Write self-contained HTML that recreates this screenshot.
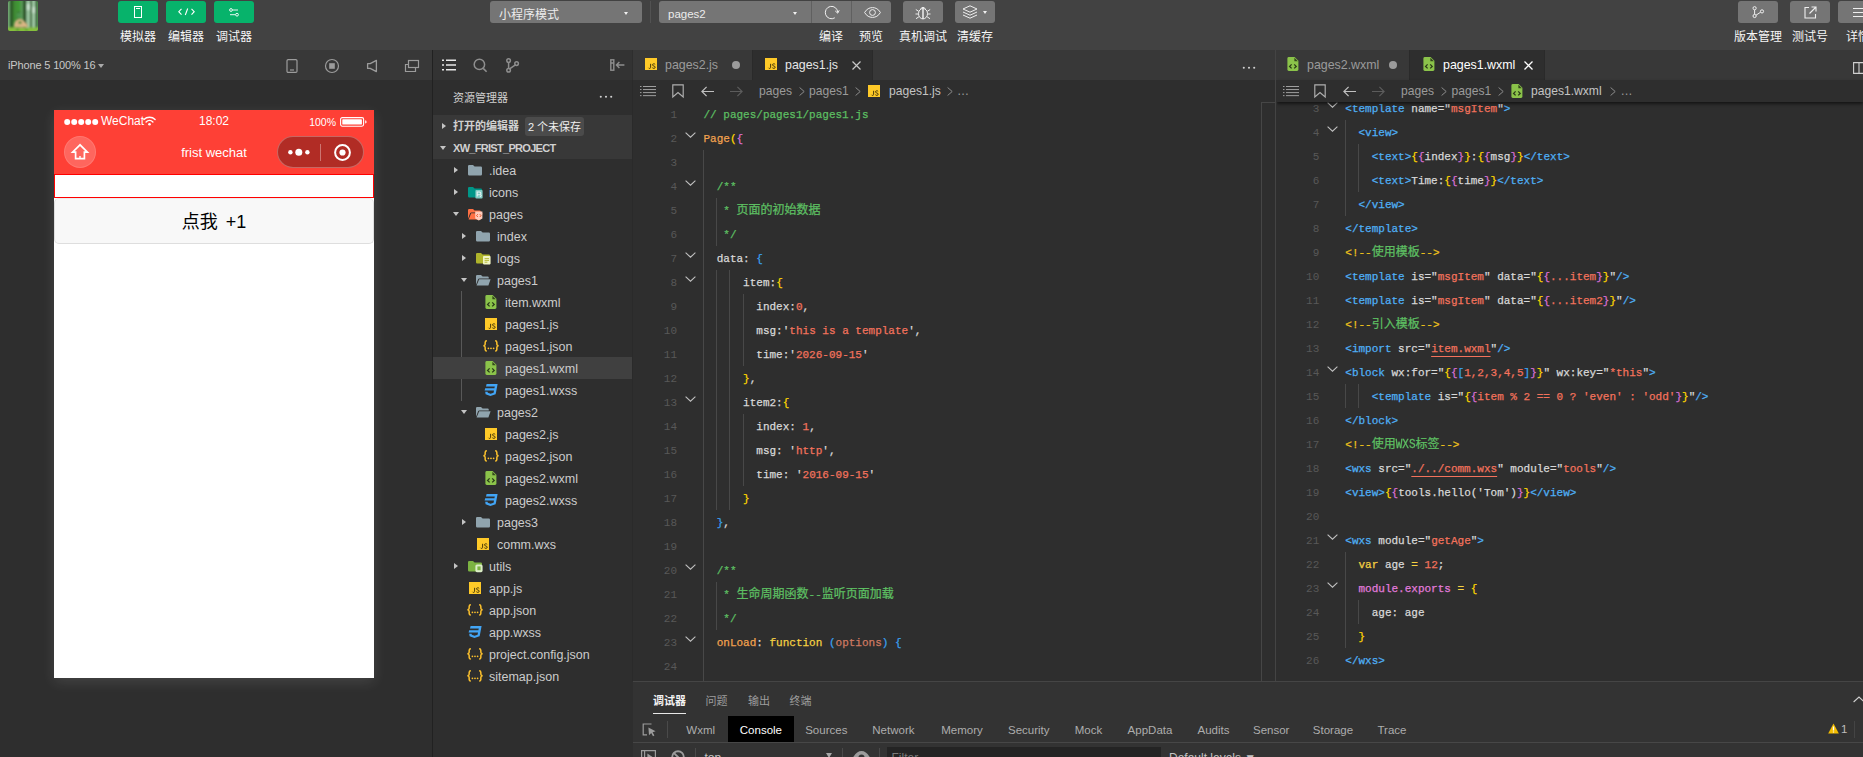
<!DOCTYPE html>
<html lang="zh-CN">
<head>
<meta charset="utf-8">
<title>微信开发者工具</title>
<style>
*{box-sizing:border-box;margin:0;padding:0}
html,body{width:1863px;height:757px;overflow:hidden;background:#2e2e2e}
body{position:relative;font-family:"Liberation Sans","Noto Sans CJK SC",sans-serif;font-size:12px;color:#ccc;-webkit-font-smoothing:antialiased}
.abs{position:absolute}
svg{display:block;overflow:visible}
/* ---------- top toolbar ---------- */
#toolbar{left:0;top:0;width:1863px;height:50px;background:#424242}
.tbtn{position:absolute;top:1px;height:22px;width:40px;border-radius:3px;background:#757575}
.tbtn.g{background:#07b36b}
.tbtn svg{position:absolute}
.tlabel{position:absolute;top:28.6px;height:16px;line-height:16px;font-size:12px;color:#f6f6f6;text-align:center;white-space:nowrap}
.dd{position:absolute;top:1px;height:22px;border-radius:3px;background:#757575;color:#ececec;font-size:12px;line-height:22px;padding-left:9px;white-space:nowrap}
.caret{position:absolute;width:0;height:0;border-left:2.5px solid transparent;border-right:2.5px solid transparent;border-top:3px solid #f0f0f0}
/* ---------- simulator ---------- */
#simbar{left:0;top:50px;width:432px;height:30px;background:#383838}
#sim{left:0;top:80px;width:432px;height:677px;background:#2e2e2e}
#vdiv{left:432px;top:50px;width:1px;height:707px;background:#212121}
/* ---------- file tree ---------- */
#tree{left:433px;top:50px;width:199px;height:707px;background:#2e2e2e}
.row{position:absolute;left:0;width:199px;height:22px;font-size:12.5px;line-height:25.4px;color:#ccc;white-space:nowrap}
.row.sel{background:#404040}
.row span{position:absolute;top:0}
.row .ic{position:absolute}
.ar{position:absolute;top:7.7px;width:0;height:0;border-top:3.3px solid transparent;border-bottom:3.3px solid transparent;border-left:4.6px solid #c4c4c4}
.ad{position:absolute;top:9px;width:0;height:0;border-left:3.2px solid transparent;border-right:3.2px solid transparent;border-top:4.4px solid #c4c4c4}
/* ---------- editors ---------- */
.ed{background:#2e2e2e}
.tabstrip{position:absolute;left:0;top:0;right:0;height:30px;background:#383838}
.tab{position:absolute;top:0;height:30px;background:#383838;font-size:12.4px;line-height:31.4px;color:#9b9b9b;white-space:nowrap}
.tab.on{background:#2e2e2e;color:#e6e6e6}
.crumb{position:absolute;left:0;top:30px;right:0;height:22px;font-size:12.1px;line-height:23.6px;color:#9b9b9b;white-space:nowrap}
.code{position:absolute;font-family:"Liberation Mono","Noto Sans CJK SC",monospace;font-size:11px;line-height:24px;white-space:pre;color:#d8d8d8;-webkit-text-stroke:.25px}
.ln{position:absolute;font-family:"Liberation Mono",monospace;font-size:11px;line-height:24px;text-align:right;color:#585858;white-space:pre}
.code .c,.c{color:#5dbf62}.o{color:#f2a24e}.y{color:#ffd700}.p{color:#da70d6}.b{color:#3aa0f0}.s{color:#f3725c}.t{color:#4fb0f6}.k{color:#f5d142}.v{color:#e27bdc}.a{color:#cf7a62}.m{color:#efc21c}
.zh{font-size:12px}
.u{text-decoration:underline;text-underline-offset:3.5px;text-decoration-thickness:1px}
.fold{position:absolute}
.gd{position:absolute;width:1px;background:#484848}
.dot{position:absolute;top:11px;width:8px;height:8px;border-radius:4px;background:#9b9b9b}
.tab.hi{color:#fff}
/* ---------- bottom panel ---------- */
#panel{left:633px;top:681px;width:1230px;height:76px;background:#333;border-top:1px solid #454545}
.ptab{top:9.5px;height:18px;line-height:18px;font-size:11px;color:#9d9d9d;white-space:nowrap}
.dt{position:absolute;top:34px;width:80px;height:26px;line-height:28.6px;font-size:11.5px;color:#adadad;text-align:center;white-space:nowrap}
.dt.on{color:#fff}
</style>
</head>
<body>
<svg width="0" height="0" style="position:absolute">
<defs>
<symbol id="i-folder" viewBox="0 0 16 14"><path d="M1 3.1Q1 2 2.2 2H6L7.6 3.6H13.8Q15 3.6 15 4.8V11.3Q15 12.5 13.8 12.5H2.2Q1 12.5 1 11.3Z" fill="#90a4ae"/></symbol>
<symbol id="i-folder-open" viewBox="0 0 16 14"><path d="M1 3.1Q1 2 2.2 2H6L7.6 3.6H12.6Q13.8 3.6 13.8 4.8V5.4H4.4Q3.4 5.4 3 6.4L1 11.8Z" fill="#90a4ae"/><path d="M4.2 6.2H15.6L13.4 12.5H1.6Z" fill="#90a4ae"/></symbol>
<symbol id="i-folder-icons" viewBox="0 0 16 14"><path d="M1 3.1Q1 2 2.2 2H6L7.6 3.6H13.8Q15 3.6 15 4.8V11.3Q15 12.5 13.8 12.5H2.2Q1 12.5 1 11.3Z" fill="#009688"/><rect x="8.4" y="5" width="7.2" height="8.6" rx="1" fill="#80cbc4"/><path d="M10.2 11.6V7H12.4A1.4 1.4 0 0 1 12.4 9.8H10.2M13 11.8L14.6 10.2" stroke="#e0f2f1" stroke-width="1.1" fill="none"/></symbol>
<symbol id="i-folder-pages" viewBox="0 0 16 14"><path d="M1 3.1Q1 2 2.2 2H6L7.6 3.6H12.6Q13.8 3.6 13.8 4.8V5.4H4.4Q3.4 5.4 3 6.4L1 11.8Z" fill="#ff7043"/><path d="M4.2 6.2H15.6L13.4 12.5H1.6Z" fill="#ff7043"/><path d="M8.2 4.6H15.4V11.4L11.8 13.6L8.2 11.4Z" fill="#ffccbc"/><path d="M10.8 7.2L9.6 8.6L10.8 10M12.8 7.2L14 8.6L12.8 10" stroke="#e64a19" stroke-width=".9" fill="none"/></symbol>
<symbol id="i-folder-logs" viewBox="0 0 16 14"><path d="M1 3.1Q1 2 2.2 2H6L7.6 3.6H13.8Q15 3.6 15 4.8V11.3Q15 12.5 13.8 12.5H2.2Q1 12.5 1 11.3Z" fill="#afb42b"/><rect x="8" y="5" width="7.6" height="8.4" rx=".8" fill="#f0f4c3"/><path d="M9.6 7.6H14M9.6 9.4H14M9.6 11.2H12.4" stroke="#afb42b" stroke-width=".9"/></symbol>
<symbol id="i-folder-utils" viewBox="0 0 16 14"><path d="M1 3.1Q1 2 2.2 2H6L7.6 3.6H13.8Q15 3.6 15 4.8V11.3Q15 12.5 13.8 12.5H2.2Q1 12.5 1 11.3Z" fill="#7cb342"/><rect x="8.4" y="5.4" width="7.2" height="7.8" rx="1.6" fill="#dcedc8"/><rect x="10.4" y="7.4" width="3.2" height="3.8" fill="#7cb342"/></symbol>
<symbol id="i-wxml" viewBox="0 0 12 14"><path d="M1.8 0H7.6L11.4 3.8V12.6Q11.4 14 10 14H1.8Q.4 14 .4 12.6V1.4Q.4 0 1.8 0Z" fill="#8bc34a"/><path d="M7.4 .8V4.2H10.8Z" fill="#33471c"/><path d="M4.6 7.4L2.6 9.4L4.6 11.4M7.2 7.4L9.2 9.4L7.2 11.4" stroke="#2a3a18" stroke-width="1.3" fill="none"/></symbol>
<symbol id="i-js" viewBox="0 0 12 12"><rect width="12" height="12" fill="#ffca28"/><path d="M5.6 5.8V9.4Q5.6 10.4 4.6 10.4Q3.8 10.4 3.5 9.8" stroke="#4a3b0a" stroke-width="1" fill="none"/><path d="M10.2 6.4Q9.6 5.7 8.6 5.8Q7.5 5.9 7.5 6.9Q7.5 7.7 8.8 8Q10.2 8.3 10.2 9.2Q10.2 10.3 8.9 10.4Q7.8 10.4 7.3 9.6" stroke="#4a3b0a" stroke-width="1" fill="none"/></symbol>
<symbol id="i-json" viewBox="0.6 0 14.8 12" preserveAspectRatio="none"><path d="M4.2 .8Q2.6 .8 2.6 2.4V4.2Q2.6 5.6 1 5.8Q2.6 6 2.6 7.4V9.4Q2.6 11 4.2 11M11.8 .8Q13.4 .8 13.4 2.4V4.2Q13.4 5.6 15 5.8Q13.4 6 13.4 7.4V9.4Q13.4 11 11.8 11" stroke="#fbc02d" stroke-width="1.4" fill="none"/><circle cx="5.6" cy="8.4" r=".8" fill="#fbc02d"/><circle cx="8" cy="8.4" r=".8" fill="#fbc02d"/><circle cx="10.4" cy="8.4" r=".8" fill="#fbc02d"/></symbol>
<symbol id="i-wxss" viewBox="0 0 14 12"><path d="M2.6 0H13.6L12.2 7.6L11.6 10.2L6.4 12L1.6 10.2L1.2 7.8H3.6L3.8 8.8L6.6 9.8L9.6 8.8L10 6.4H.6L1.2 4.2H10.4L10.8 2.4H2Z" fill="#42a5f5"/></symbol>
</defs></svg>
<div id="toolbar" class="abs">
<!-- avatar -->
<div class="abs" id="avatar" style="left:8px;top:1px;width:30px;height:30px;border-radius:2px;overflow:hidden;background:#3f7a36">
<svg width="30" height="30" viewBox="0 0 30 30">
<defs><filter id="avb" x="-10%" y="-10%" width="120%" height="120%"><feGaussianBlur stdDeviation=".9"/></filter></defs>
<g filter="url(#avb)">
<rect x="-2" y="-2" width="34" height="34" fill="#3d7d34"/>
<rect x="-1" y="-2" width="2.4" height="30" fill="#7fb383"/>
<rect x="2" y="-2" width="3.4" height="30" fill="#2c5a28"/>
<rect x="5.4" y="-2" width="4" height="30" fill="#3f8c35"/>
<rect x="9" y="-2" width="4" height="12" fill="#3f9a34"/>
<rect x="12.6" y="-2" width="2.6" height="30" fill="#5c9a5a"/>
<rect x="15.2" y="-2" width="3.2" height="30" fill="#234a20"/>
<rect x="18.4" y="-2" width="3.8" height="30" fill="#9cc7a2"/>
<rect x="19" y="3" width="2.6" height="6" fill="#d3ead8"/>
<rect x="22.2" y="-2" width="2" height="30" fill="#2a5726"/>
<rect x="24.2" y="-2" width="2.8" height="30" fill="#a9d1ae"/>
<rect x="24.6" y="6" width="2.2" height="6" fill="#d9eedd"/>
<rect x="27" y="-2" width="2.2" height="30" fill="#29562a"/>
<rect x="29.2" y="-2" width="3" height="30" fill="#5f9c5f"/>
<rect x="9" y="12" width="4" height="5" fill="#4c9450"/>
<rect x="-2" y="26.4" width="34" height="6" fill="#86bf3c"/>
<rect x="8" y="27.5" width="3" height="2.5" fill="#5da02e"/><rect x="17" y="27.5" width="3" height="2.5" fill="#64a832"/>
</g>
<g filter="url(#avb)"><path d="M6.2 26.4Q5.4 22 8.4 19.2Q11.6 16.6 14.6 18.8L19.2 23Q20.2 24.6 19.6 26.6Z" fill="#dab684"/>
<ellipse cx="12" cy="21.4" rx="1.7" ry="1.5" fill="#3f8a34"/></g>
</svg></div>
<!-- left green buttons -->
<div class="tbtn g" style="left:118px"><svg style="left:16px;top:5px" width="8" height="12" viewBox="0 0 8 12"><rect x=".5" y=".5" width="7" height="11" fill="none" stroke="#fff"/><path d="M2 2.5h4" stroke="#fff"/></svg></div>
<div class="tbtn g" style="left:166px"><svg style="left:12px;top:7px" width="17" height="8" viewBox="0 0 17 8"><path d="M3.5 .8L.8 3.7L3.5 6.6M13.5 .8L16.2 3.7L13.5 6.6M9.7 .5L7.3 7" fill="none" stroke="#fff" stroke-width="1.1"/></svg></div>
<div class="tbtn g" style="left:214px"><svg style="left:15px;top:7px" width="10" height="9" viewBox="0 0 10 9"><circle cx="2" cy="2" r="1.4" fill="none" stroke="#fff" stroke-width=".9"/><path d="M3.6 2H9" stroke="#fff" stroke-width=".9"/><circle cx="8" cy="6.7" r="1.4" fill="none" stroke="#fff" stroke-width=".9"/><path d="M1 6.7H6.4" stroke="#fff" stroke-width=".9"/></svg></div>
<div class="tlabel" style="left:108px;width:60px">模拟器</div>
<div class="tlabel" style="left:156px;width:60px">编辑器</div>
<div class="tlabel" style="left:204px;width:60px">调试器</div>
<!-- center -->
<div class="dd" style="left:490px;width:152px;line-height:28px;overflow:hidden">小程序模式<i class="caret" style="left:134px;top:10.5px"></i></div>
<div class="abs" style="left:650px;top:1px;width:1px;height:22px;background:#525252"></div>
<div class="dd" style="left:659px;width:232px;line-height:26px;font-size:11.5px">pages2<i class="caret" style="left:134px;top:10.5px"></i>
<i class="abs" style="left:152px;top:0;width:1px;height:22px;background:#606060"></i>
<i class="abs" style="left:192px;top:0;width:1px;height:22px;background:#606060"></i>
<svg class="abs" style="left:164.6px;top:4.3px" width="16" height="15" viewBox="0 0 16 15"><path d="M13.7 7.5A6.2 6.2 0 1 0 10.8 12.8" fill="none" stroke="#eee" stroke-width="1"/><path d="M11.2 5.9L13.7 8.2L15.2 5.3" fill="none" stroke="#eee" stroke-width="1"/></svg>
<svg class="abs" style="left:204.6px;top:6.4px" width="17" height="11" viewBox="0 0 17 11"><path d="M.6 5.5C2.6 2 5.4 .6 8.5 .6S14.4 2 16.4 5.5C14.4 9 11.6 10.4 8.5 10.4S2.600 9 .6 5.500Z" fill="none" stroke="#eee" stroke-width="1"/><circle cx="8.5" cy="5.5" r="2.9" fill="none" stroke="#eee" stroke-width="1"/></svg>
</div>
<div class="tlabel" style="left:801px;width:60px">编译</div>
<div class="tlabel" style="left:841px;width:60px">预览</div>
<div class="tbtn" style="left:903px"><svg style="left:11px;top:3px" width="18" height="16" viewBox="0 0 18 16"><ellipse cx="9" cy="9.7" rx="4.5" ry="5.2" fill="none" stroke="#eee"/><path d="M9 4.6V14.9" stroke="#eee" stroke-width="1.5"/><path d="M6.7 4.9A2.5 2.5 0 0 1 11.3 4.900M4.700 7.300L1.800 5.500M13.300 7.300L16.200 5.500M4.500 10H1.500M13.500 10H16.500M4.900 12.800L2 14.700M13.100 12.800L16 14.700" fill="none" stroke="#eee"/></svg></div>
<div class="tbtn" style="left:955px"><svg style="left:7px;top:4px" width="16" height="14" viewBox="0 0 16 14"><path d="M8 .8L15 4L8 7.2L1 4Z M1 7L8 10.2L15 7M1 10L8 13.2L15 10" fill="none" stroke="#eee" stroke-width="1"/></svg><i class="caret" style="left:28px;top:10px"></i></div>
<div class="tlabel" style="left:893px;width:60px">真机调试</div>
<div class="tlabel" style="left:945px;width:60px">清缓存</div>
<!-- right -->
<div class="tbtn" style="left:1738px"><svg style="left:14px;top:4px" width="13" height="14" viewBox="0 0 13 14"><circle cx="2.6" cy="3.2" r="1.6" fill="none" stroke="#eee"/><circle cx="2.6" cy="11" r="1.6" fill="none" stroke="#eee"/><circle cx="10" cy="6.4" r="1.6" fill="none" stroke="#eee"/><path d="M2.6 4.8V9.4M4 10.2L8.6 7.2" fill="none" stroke="#eee"/></svg></div>
<div class="tbtn" style="left:1790px"><svg style="left:14px;top:5px" width="13" height="13" viewBox="0 0 13 13"><path d="M5 1.5H1V12H11.5V8" fill="none" stroke="#eee" stroke-width="1.1"/><path d="M7.5 1H12V5.5M12 1L5.5 7.5" fill="none" stroke="#eee" stroke-width="1.1"/></svg></div>
<div class="tbtn" style="left:1838px"><svg style="left:15px;top:6px" width="12" height="11" viewBox="0 0 12 11"><path d="M0 1.5H12M0 5.5H12M0 9.5H12" stroke="#eee" stroke-width="1.1"/></svg></div>
<div class="tlabel" style="left:1728px;width:60px">版本管理</div>
<div class="tlabel" style="left:1780px;width:60px">测试号</div>
<div class="tlabel" style="left:1846px;width:24px;text-align:left">详情</div>
</div>
<div id="simbar" class="abs">
<div class="abs" style="left:8px;top:0;height:30px;line-height:31px;font-size:11px;letter-spacing:-.15px;color:#c8c8c8;white-space:nowrap">iPhone 5 100% 16<i class="caret" style="left:90px;top:14px;border-top-color:#aaa;border-left-width:3px;border-right-width:3px;border-top-width:4px"></i></div>
<svg class="abs" style="left:286px;top:9px" width="12" height="14" viewBox="0 0 12 14"><rect x="1" y=".6" width="10" height="12.8" rx="1.2" fill="none" stroke="#9c9c9c" stroke-width="1.2"/><path d="M4 11H8" stroke="#9c9c9c" stroke-width="1.2"/></svg>
<svg class="abs" style="left:324px;top:8px" width="16" height="16" viewBox="0 0 16 16"><circle cx="8" cy="8" r="6.5" fill="none" stroke="#9c9c9c" stroke-width="1.2"/><rect x="5.2" y="5.2" width="5.6" height="5.6" fill="#9c9c9c"/></svg>
<svg class="abs" style="left:366px;top:9px" width="12" height="14" viewBox="0 0 12 14"><path d="M1.6 4.6H4.2L10.4 1.4V12.6L4.2 9.4H1.6Z" fill="none" stroke="#9c9c9c" stroke-width="1.3" stroke-linejoin="round"/></svg>
<svg class="abs" style="left:404px;top:9px" width="16" height="14" viewBox="0 0 16 14"><rect x="4.5" y="1.5" width="10" height="7" fill="none" stroke="#9c9c9c" stroke-width="1.2"/><path d="M4.5 5.5H1.5V12.5H11.5V8.5" fill="none" stroke="#9c9c9c" stroke-width="1.2"/></svg>
</div>
<div id="sim" class="abs">
<div class="abs" id="phone" style="left:54px;top:30px;width:320px;height:568px;background:#fff;box-shadow:0 4px 13px rgba(255,255,255,.11)">
<div class="abs" style="left:0;top:0;width:320px;height:64px;background:#fe4036"></div>
<!-- status bar -->
<svg class="abs" style="left:9.6px;top:8px" width="36" height="8" viewBox="0 0 36 8"><g fill="#fff"><circle cx="3.2" cy="4" r="3"/><circle cx="10.2" cy="4" r="3"/><circle cx="17.2" cy="4" r="3"/><circle cx="24.2" cy="4" r="3"/><circle cx="31.2" cy="4" r="3"/></g></svg>
<div class="abs" style="left:47px;top:2px;height:18px;line-height:18px;font-size:12px;color:#fff;white-space:nowrap">WeChat</div>
<svg class="abs" style="left:89px;top:6px" width="13" height="10" viewBox="0 0 13 10"><g fill="none" stroke="#fff" stroke-width="1.4" stroke-linecap="round"><path d="M.9 3.6A8 8 0 0 1 12.1 3.6"/><path d="M3.1 5.9A4.9 4.9 0 0 1 9.9 5.9"/></g><circle cx="6.5" cy="8.2" r="1.3" fill="#fff"/></svg>
<div class="abs" style="left:120px;top:2px;width:80px;height:18px;line-height:18px;font-size:12px;color:#fff;text-align:center">18:02</div>
<div class="abs" style="left:240px;top:3px;width:42px;height:18px;line-height:18px;font-size:10.5px;color:#fff;text-align:right">100%</div>
<svg class="abs" style="left:286px;top:7px" width="28" height="10" viewBox="0 0 28 10"><rect x=".6" y=".6" width="23" height="8.6" rx="1.6" fill="none" stroke="#fff" stroke-width="1.1"/><rect x="2.3" y="2.3" width="19.6" height="5.2" rx=".6" fill="#fff"/><path d="M25.2 3.2Q26.6 3.6 26.6 4.9Q26.6 6.2 25.2 6.6Z" fill="#fff"/></svg>
<!-- nav bar -->
<div class="abs" style="left:10px;top:26px;width:32px;height:32px;border-radius:16px;background:rgba(255,255,255,.2);border:.5px solid rgba(255,255,255,.12)"></div>
<svg class="abs" style="left:17px;top:33px" width="18" height="18" viewBox="0 0 18 18"><path d="M9 1.8L1.6 9.2H4.6V15.6H13.4V9.2H16.4Z" fill="none" stroke="#fff" stroke-width="1.7" stroke-linejoin="miter"/><path d="M9 15.6V13" stroke="#fff" stroke-width="1.4"/></svg>
<div class="abs" style="left:60px;top:32.7px;width:200px;height:20px;line-height:20px;font-size:13px;color:#fff;text-align:center">frist wechat</div>
<div class="abs" style="left:223px;top:26px;width:87px;height:32px;border-radius:16px;background:rgba(0,0,0,.3);border:1px solid rgba(255,255,255,.28)"></div>
<svg class="abs" style="left:233px;top:37px" width="24" height="10" viewBox="0 0 24 10"><g fill="#fff"><circle cx="3.4" cy="5.2" r="2.2"/><circle cx="11.8" cy="5.2" r="3.5"/><circle cx="20.4" cy="5.2" r="2.2"/></g></svg>
<div class="abs" style="left:266px;top:34px;width:1px;height:17px;background:rgba(255,255,255,.35)"></div>
<svg class="abs" style="left:279px;top:33px" width="19" height="19" viewBox="0 0 19 19"><circle cx="9.5" cy="9.5" r="7.4" fill="none" stroke="#fff" stroke-width="2"/><circle cx="9.5" cy="9.5" r="3.1" fill="#fff"/></svg>
<!-- page -->
<div class="abs" style="left:0;top:64px;width:320px;height:24px;border:1px solid #f00;background:#fff"></div>
<div class="abs" style="left:0;top:88px;width:320px;height:46px;border-radius:5px;background:#f8f8f8;border:1px solid #dedede;border-top-color:#ececec;color:#000;font-size:18px;line-height:46px;text-align:center;word-spacing:3px">点我 +1</div>
</div>
</div>
<div id="vdiv" class="abs"></div>
<div id="tree" class="abs">
<div class="abs" style="left:0;top:0;width:199px;height:30px;background:#333"></div>
<div class="abs" style="left:199px;top:30px;width:1px;height:601px;background:#2a2a2a"></div>
<svg class="abs" style="left:9px;top:9px" width="14" height="12" viewBox="0 0 14 12"><path d="M0 1.2H2M4 1.2H14M0 6H2M4 6H14M0 10.8H2M4 10.8H14" stroke="#e8e8e8" stroke-width="1.5"/></svg>
<svg class="abs" style="left:40px;top:8px" width="15" height="15" viewBox="0 0 15 15"><circle cx="6.4" cy="6.4" r="5.2" fill="none" stroke="#8e8e8e" stroke-width="1.5"/><path d="M10.2 10.4L13.6 13.8" stroke="#8e8e8e" stroke-width="1.6"/></svg>
<svg class="abs" style="left:72px;top:8px" width="15" height="15" viewBox="0 0 15 15"><g fill="none" stroke="#8e8e8e" stroke-width="1.5"><circle cx="3.6" cy="2.6" r="1.8"/><circle cx="3.6" cy="12.2" r="1.8"/><circle cx="11.6" cy="5.6" r="1.8"/><path d="M3.6 4.4V10.4M4.6 10.8L10.4 6.8"/></g></svg>
<svg class="abs" style="left:177px;top:9px" width="15" height="12" viewBox="0 0 15 12"><g fill="none" stroke="#8e8e8e" stroke-width="1.4"><rect x=".8" y=".8" width="3" height="10.4"/><path d="M.8 4H3.8M14.4 6H6.6M9.4 3L6.4 6L9.4 9"/></g></svg>
<div class="abs" style="left:20px;top:30px;height:35px;line-height:37px;font-size:11px;color:#d0d0d0;white-space:nowrap">资源管理器</div>
<svg class="abs" style="left:166px;top:45px" width="14" height="4" viewBox="0 0 14 4"><g fill="#d0d0d0"><circle cx="1.8" cy="1.8" r="1.05"/><circle cx="7" cy="1.8" r="1.05"/><circle cx="12.2" cy="1.8" r="1.05"/></g></svg>
<div class="abs" style="left:0;top:65px;width:199px;height:44px;background:#383838"></div>
<i class="ar" style="left:8.5px;top:72.7px"></i>
<div class="abs" style="left:20px;top:65px;height:22px;line-height:23px;font-size:11px;font-weight:bold;color:#d0d0d0;white-space:nowrap">打开的编辑器</div>
<div class="abs" style="left:92px;top:67px;width:59px;height:19px;border-radius:3px;background:#4b4b4b;line-height:20.4px;font-size:11px;color:#f0f0f0;text-align:center;white-space:nowrap">2 个未保存</div>
<i class="ad" style="left:7px;top:96px"></i>
<div class="abs" style="left:20px;top:87px;height:22px;line-height:22px;font-size:11px;font-weight:bold;letter-spacing:-.7px;color:#d0d0d0;white-space:nowrap">XW_FRIST_PROJECT</div>
<div class="abs" style="left:28px;top:241px;width:1px;height:110px;background:#585858"></div>
<div class="row" style="top:109px"><i class="ar" style="left:21px"></i><svg class="ic" style="left:34px;top:4px" width="16" height="14"><use href="#i-folder"/></svg><span style="left:56px">.idea</span></div>
<div class="row" style="top:131px"><i class="ar" style="left:21px"></i><svg class="ic" style="left:34px;top:4px" width="16" height="14"><use href="#i-folder-icons"/></svg><span style="left:56px">icons</span></div>
<div class="row" style="top:153px"><i class="ad" style="left:20px"></i><svg class="ic" style="left:34px;top:4px" width="16" height="14"><use href="#i-folder-pages"/></svg><span style="left:56px">pages</span></div>
<div class="row" style="top:175px"><i class="ar" style="left:29px"></i><svg class="ic" style="left:42px;top:4px" width="16" height="14"><use href="#i-folder"/></svg><span style="left:64px">index</span></div>
<div class="row" style="top:197px"><i class="ar" style="left:29px"></i><svg class="ic" style="left:42px;top:4px" width="16" height="14"><use href="#i-folder-logs"/></svg><span style="left:64px">logs</span></div>
<div class="row" style="top:219px"><i class="ad" style="left:28px"></i><svg class="ic" style="left:42px;top:4px" width="16" height="14"><use href="#i-folder-open"/></svg><span style="left:64px">pages1</span></div>
<div class="row" style="top:241px"><svg class="ic" style="left:52px;top:4px" width="12" height="14"><use href="#i-wxml"/></svg><span style="left:72px">item.wxml</span></div>
<div class="row" style="top:263px"><svg class="ic" style="left:52px;top:5px" width="12" height="12"><use href="#i-js"/></svg><span style="left:72px">pages1.js</span></div>
<div class="row" style="top:285px"><svg class="ic" style="left:50px;top:5px" width="16" height="12"><use href="#i-json"/></svg><span style="left:72px">pages1.json</span></div>
<div class="row sel" style="top:307px"><svg class="ic" style="left:52px;top:4px" width="12" height="14"><use href="#i-wxml"/></svg><span style="left:72px">pages1.wxml</span></div>
<div class="row" style="top:329px"><svg class="ic" style="left:51px;top:5px" width="14" height="12"><use href="#i-wxss"/></svg><span style="left:72px">pages1.wxss</span></div>
<div class="row" style="top:351px"><i class="ad" style="left:28px"></i><svg class="ic" style="left:42px;top:4px" width="16" height="14"><use href="#i-folder-open"/></svg><span style="left:64px">pages2</span></div>
<div class="row" style="top:373px"><svg class="ic" style="left:52px;top:5px" width="12" height="12"><use href="#i-js"/></svg><span style="left:72px">pages2.js</span></div>
<div class="row" style="top:395px"><svg class="ic" style="left:50px;top:5px" width="16" height="12"><use href="#i-json"/></svg><span style="left:72px">pages2.json</span></div>
<div class="row" style="top:417px"><svg class="ic" style="left:52px;top:4px" width="12" height="14"><use href="#i-wxml"/></svg><span style="left:72px">pages2.wxml</span></div>
<div class="row" style="top:439px"><svg class="ic" style="left:51px;top:5px" width="14" height="12"><use href="#i-wxss"/></svg><span style="left:72px">pages2.wxss</span></div>
<div class="row" style="top:461px"><i class="ar" style="left:29px"></i><svg class="ic" style="left:42px;top:4px" width="16" height="14"><use href="#i-folder"/></svg><span style="left:64px">pages3</span></div>
<div class="row" style="top:483px"><svg class="ic" style="left:44px;top:5px" width="12" height="12"><use href="#i-js"/></svg><span style="left:64px">comm.wxs</span></div>
<div class="row" style="top:505px"><i class="ar" style="left:21px"></i><svg class="ic" style="left:34px;top:4px" width="16" height="14"><use href="#i-folder-utils"/></svg><span style="left:56px">utils</span></div>
<div class="row" style="top:527px"><svg class="ic" style="left:36px;top:5px" width="12" height="12"><use href="#i-js"/></svg><span style="left:56px">app.js</span></div>
<div class="row" style="top:549px"><svg class="ic" style="left:34px;top:5px" width="16" height="12"><use href="#i-json"/></svg><span style="left:56px">app.json</span></div>
<div class="row" style="top:571px"><svg class="ic" style="left:35px;top:5px" width="14" height="12"><use href="#i-wxss"/></svg><span style="left:56px">app.wxss</span></div>
<div class="row" style="top:593px"><svg class="ic" style="left:34px;top:5px" width="16" height="12"><use href="#i-json"/></svg><span style="left:56px">project.config.json</span></div>
<div class="row" style="top:615px"><svg class="ic" style="left:34px;top:5px" width="16" height="12"><use href="#i-json"/></svg><span style="left:56px">sitemap.json</span></div>
</div>
<!--ED1--><div id="ed1" class="abs ed" style="left:633px;top:50px;width:642px;height:631px;overflow:hidden">
<div class="ln" style="left:0;top:52.5px;width:44px">1
2
3
4
5
6
7
8
9
10
11
12
13
14
15
16
17
18
19
20
21
22
23
24</div>
<svg class="fold" style="left:52.3px;top:82px" width="11" height="6" viewBox="0 0 11 6"><path d="M.6 .6L5.5 5.2L10.4 .6" fill="none" stroke="#c0c0c0" stroke-width="1.1"/></svg>
<svg class="fold" style="left:52.3px;top:130px" width="11" height="6" viewBox="0 0 11 6"><path d="M.6 .6L5.5 5.2L10.4 .6" fill="none" stroke="#c0c0c0" stroke-width="1.1"/></svg>
<svg class="fold" style="left:52.3px;top:202px" width="11" height="6" viewBox="0 0 11 6"><path d="M.6 .6L5.5 5.2L10.4 .6" fill="none" stroke="#c0c0c0" stroke-width="1.1"/></svg>
<svg class="fold" style="left:52.3px;top:226px" width="11" height="6" viewBox="0 0 11 6"><path d="M.6 .6L5.5 5.2L10.4 .6" fill="none" stroke="#c0c0c0" stroke-width="1.1"/></svg>
<svg class="fold" style="left:52.3px;top:346px" width="11" height="6" viewBox="0 0 11 6"><path d="M.6 .6L5.5 5.2L10.4 .6" fill="none" stroke="#c0c0c0" stroke-width="1.1"/></svg>
<svg class="fold" style="left:52.3px;top:514px" width="11" height="6" viewBox="0 0 11 6"><path d="M.6 .6L5.5 5.2L10.4 .6" fill="none" stroke="#c0c0c0" stroke-width="1.1"/></svg>
<svg class="fold" style="left:52.3px;top:586px" width="11" height="6" viewBox="0 0 11 6"><path d="M.6 .6L5.5 5.2L10.4 .6" fill="none" stroke="#c0c0c0" stroke-width="1.1"/></svg>
<i class="gd" style="left:70px;top:100px;height:552px"></i>
<i class="gd" style="left:83px;top:148px;height:48px"></i>
<i class="gd" style="left:83px;top:220px;height:240px"></i>
<i class="gd" style="left:83px;top:532px;height:48px"></i>
<i class="gd" style="left:96px;top:220px;height:240px"></i>
<i class="gd" style="left:110px;top:244px;height:72px"></i>
<i class="gd" style="left:110px;top:364px;height:72px"></i>
<div class="code" style="left:70.5px;top:52.5px"><span class="c">// pages/pages1/pages1.js</span>
<span class="o">Page</span><span class="y">(</span><span class="p">{</span>

  <span class="c">/**</span>
   <span class="c">* </span><span class="c zh">页面的初始数据</span>
   <span class="c">*/</span>
  data<span>:</span> <span class="b">{</span>
      item:<span class="y">{</span>
        index:<span class="s">0</span>,
        msg:'<span class="s">this is a template</span>',
        time:'<span class="s">2026-09-15</span>'
      <span class="y">}</span>,
      item2:<span class="y">{</span>
        index: <span class="s">1</span>,
        msg: '<span class="s">http</span>',
        time: '<span class="s">2016-09-15</span>'
      <span class="y">}</span>
  <span class="b">}</span>,

  <span class="c">/**</span>
   <span class="c">* </span><span class="c zh">生命周期函数</span><span class="c">--</span><span class="c zh">监听页面加载</span>
   <span class="c">*/</span>
  <span class="o">onLoad</span>: <span class="k">function</span> <span class="b">(</span><span class="a">options</span><span class="b">)</span> <span class="b">{</span>
</div>
<div class="tabstrip">
<div class="tab" style="left:0;width:119px"><svg class="abs" style="left:12px;top:8px" width="12" height="12"><use href="#i-js"/></svg><span class="abs" style="left:32px">pages2.js</span><i class="dot" style="left:99px"></i></div>
<div class="tab on" style="left:119px;width:121px;border-left:1px solid #2a2a2a;border-right:1px solid #2a2a2a"><svg class="abs" style="left:12px;top:8px" width="12" height="12"><use href="#i-js"/></svg><span class="abs" style="left:32px">pages1.js</span><svg class="abs" style="left:99px;top:11px" width="9" height="9" viewBox="0 0 9 9"><path d="M.5 .5L8.5 8.5M8.5 .5L.5 8.5" stroke="#c8c8c8" stroke-width="1.2"/></svg></div>
<svg class="abs" style="left:608.5px;top:15.8px" width="14" height="4" viewBox="0 0 14 4"><g fill="#d0d0d0"><circle cx="1.8" cy="1.8" r="1.05"/><circle cx="7" cy="1.8" r="1.05"/><circle cx="12.2" cy="1.8" r="1.05"/></g></svg>
</div>
<div class="crumb">
<svg class="abs" style="left:7px;top:6px" width="16" height="11" viewBox="0 0 16 11"><path d="M0 .5H1.5M3 .5H16M0 3.55H1.5M3 3.55H16M0 6.6H1.5M3 6.6H16M0 9.65H1.5M3 9.65H16" stroke="#b4b4b4" stroke-width=".85"/></svg>
<svg class="abs" style="left:39px;top:4px" width="12" height="14" viewBox="0 0 12 14"><path d="M.8 .8H11.2V13L6 8.6L.8 13Z" fill="none" stroke="#b0b0b0" stroke-width="1.15"/></svg>
<svg class="abs" style="left:68px;top:6px" width="13" height="11" viewBox="0 0 13 11"><path d="M13 5.5H1M5.6 .8L.9 5.5L5.6 10.2" fill="none" stroke="#c0c0c0" stroke-width="1.2"/></svg>
<svg class="abs" style="left:96.5px;top:6px" width="13" height="11" viewBox="0 0 13 11"><path d="M0 5.5H12M7.4 .8L12.1 5.5L7.4 10.2" fill="none" stroke="#5c5c5c" stroke-width="1.2"/></svg>
<span class="abs" style="left:126px">pages</span><svg class="abs" style="left:166px;top:7px" width="6" height="9" viewBox="0 0 6 9"><path d="M.6 .5L5.2 4.5L.6 8.5" fill="none" stroke="#8c8c8c" stroke-width="1"/></svg><span class="abs" style="left:176px">pages1</span><svg class="abs" style="left:222px;top:7px" width="6" height="9" viewBox="0 0 6 9"><path d="M.6 .5L5.2 4.5L.6 8.5" fill="none" stroke="#8c8c8c" stroke-width="1"/></svg><svg class="abs" style="left:235px;top:5px" width="12" height="12"><use href="#i-js"/></svg><span class="abs" style="left:256px;color:#c4c4c4">pages1.js</span><svg class="abs" style="left:314px;top:7px" width="6" height="9" viewBox="0 0 6 9"><path d="M.6 .5L5.2 4.5L.6 8.5" fill="none" stroke="#8c8c8c" stroke-width="1"/></svg><span class="abs" style="left:324px">…</span>
</div>
<div class="abs" style="left:628px;top:52px;width:15px;height:579px;border-left:1px solid #464646;border-top:1px solid #464646"></div>
</div><!--/ED1-->
<div class="abs" style="left:1275px;top:50px;width:1px;height:631px;background:#444"></div><div class="abs" style="left:1276px;top:50px;width:1px;height:30px;background:#383838"></div>
<!--ED2--><div id="ed2" class="abs ed" style="left:1277px;top:50px;width:586px;height:631px;overflow:hidden">
<div class="ln" style="left:0;top:46.5px;width:42.3px">3
4
5
6
7
8
9
10
11
12
13
14
15
16
17
18
19
20
21
22
23
24
25
26
27</div>
<svg class="fold" style="left:50px;top:52px" width="11" height="6" viewBox="0 0 11 6"><path d="M.6 .6L5.5 5.2L10.4 .6" fill="none" stroke="#c0c0c0" stroke-width="1.1"/></svg>
<svg class="fold" style="left:50px;top:76px" width="11" height="6" viewBox="0 0 11 6"><path d="M.6 .6L5.5 5.2L10.4 .6" fill="none" stroke="#c0c0c0" stroke-width="1.1"/></svg>
<svg class="fold" style="left:50px;top:316px" width="11" height="6" viewBox="0 0 11 6"><path d="M.6 .6L5.5 5.2L10.4 .6" fill="none" stroke="#c0c0c0" stroke-width="1.1"/></svg>
<svg class="fold" style="left:50px;top:484px" width="11" height="6" viewBox="0 0 11 6"><path d="M.6 .6L5.5 5.2L10.4 .6" fill="none" stroke="#c0c0c0" stroke-width="1.1"/></svg>
<svg class="fold" style="left:50px;top:532px" width="11" height="6" viewBox="0 0 11 6"><path d="M.6 .6L5.5 5.2L10.4 .6" fill="none" stroke="#c0c0c0" stroke-width="1.1"/></svg>
<i class="gd" style="left:68px;top:70px;height:96px"></i>
<i class="gd" style="left:81px;top:94px;height:48px"></i>
<i class="gd" style="left:68px;top:334px;height:24px"></i>
<i class="gd" style="left:81px;top:334px;height:24px"></i>
<i class="gd" style="left:68px;top:502px;height:96px"></i>
<i class="gd" style="left:81px;top:550px;height:24px"></i>
<div class="code" style="left:68.3px;top:46.5px"><span class="t">&lt;template</span> name="<span class="s">msgItem</span>"<span class="t">&gt;</span>
  <span class="t">&lt;view&gt;</span>
    <span class="t">&lt;text&gt;</span><span class="y">{</span><span class="p">{</span>index<span class="p">}</span><span class="y">}</span>:<span class="y">{</span><span class="p">{</span>msg<span class="p">}</span><span class="y">}</span><span class="t">&lt;/text&gt;</span>
    <span class="t">&lt;text&gt;</span>Time:<span class="y">{</span><span class="p">{</span>time<span class="p">}</span><span class="y">}</span><span class="t">&lt;/text&gt;</span>
  <span class="t">&lt;/view&gt;</span>
<span class="t">&lt;/template&gt;</span>
<span class="m">&lt;!--</span><span class="c zh">使用模板</span><span class="m">--&gt;</span>
<span class="t">&lt;template</span> is="<span class="s">msgItem</span>" data="<span class="y">{</span><span class="p">{</span><span class="s">...item</span><span class="p">}</span><span class="y">}</span>"<span class="t">/&gt;</span>
<span class="t">&lt;template</span> is="<span class="s">msgItem</span>" data="<span class="y">{</span><span class="p">{</span><span class="s">...item2</span><span class="p">}</span><span class="y">}</span>"<span class="t">/&gt;</span>
<span class="m">&lt;!--</span><span class="c zh">引入模板</span><span class="m">--&gt;</span>
<span class="t">&lt;import</span> src="<span class="s u">item.wxml</span>"<span class="t">/&gt;</span>
<span class="t">&lt;block</span> wx:for="<span class="y">{</span><span class="p">{</span><span class="b">[</span><span class="s">1,2,3,4,5</span><span class="b">]</span><span class="p">}</span><span class="y">}</span>" wx:key="<span class="s">*this</span>"<span class="t">&gt;</span>
    <span class="t">&lt;template</span> is="<span class="y">{</span><span class="p">{</span><span class="s">item % 2 == 0 ? 'even' : 'odd'</span><span class="p">}</span><span class="y">}</span>"<span class="t">/&gt;</span>
<span class="t">&lt;/block&gt;</span>
<span class="m">&lt;!--</span><span class="c zh">使用</span><span class="c" style="display:inline-block;transform:scaleY(1.18);transform-origin:50% 72%">WXS</span><span class="c zh">标签</span><span class="m">--&gt;</span>
<span class="t">&lt;wxs</span> src="<span class="s u">./../comm.wxs</span>" module="<span class="s">tools</span>"<span class="t">/&gt;</span>
<span class="t">&lt;view&gt;</span><span class="y">{</span><span class="p">{</span>tools.hello('Tom')<span class="p">}</span><span class="y">}</span><span class="t">&lt;/view&gt;</span>

<span class="t">&lt;wxs</span> module="<span class="s">getAge</span>"<span class="t">&gt;</span>
  <span class="k">var</span> age <span class="k">=</span> <span class="s">12</span>;
  <span class="v">module.exports</span> <span class="k">=</span> <span class="y">{</span>
    age: age
  <span class="y">}</span>
<span class="t">&lt;/wxs&gt;</span>
</div>
<div class="tabstrip">
<div class="tab" style="left:0;width:132px"><svg class="abs" style="left:10px;top:7px" width="12" height="14"><use href="#i-wxml"/></svg><span class="abs" style="left:30px">pages2.wxml</span><i class="dot" style="left:112px"></i></div>
<div class="tab on hi" style="left:132px;width:136px;border-left:1px solid #2a2a2a;border-right:1px solid #2a2a2a"><svg class="abs" style="left:13px;top:7px" width="12" height="14"><use href="#i-wxml"/></svg><span class="abs" style="left:33px">pages1.wxml</span><svg class="abs" style="left:114px;top:11px" width="9" height="9" viewBox="0 0 9 9"><path d="M.5 .5L8.5 8.5M8.5 .5L.5 8.5" stroke="#fff" stroke-width="1.3"/></svg></div>
<svg class="abs" style="left:576px;top:12px" width="12" height="12" viewBox="0 0 12 12"><path d="M.6 .6H11.4V11.4H.6ZM6 .6V11.4" fill="none" stroke="#d0d0d0" stroke-width="1.1"/></svg>
</div>
<div class="crumb" style="background:#2e2e2e;box-shadow:0 2px 3px rgba(0,0,0,.55)">
<svg class="abs" style="left:5.5px;top:6px" width="16" height="11" viewBox="0 0 16 11"><path d="M0 .5H1.5M3 .5H16M0 3.55H1.5M3 3.55H16M0 6.6H1.5M3 6.6H16M0 9.65H1.5M3 9.65H16" stroke="#b4b4b4" stroke-width=".85"/></svg>
<svg class="abs" style="left:37px;top:4px" width="12" height="14" viewBox="0 0 12 14"><path d="M.8 .8H11.2V13L6 8.6L.8 13Z" fill="none" stroke="#b0b0b0" stroke-width="1.15"/></svg>
<svg class="abs" style="left:66px;top:6px" width="13" height="11" viewBox="0 0 13 11"><path d="M13 5.5H1M5.6 .8L.9 5.5L5.6 10.2" fill="none" stroke="#c0c0c0" stroke-width="1.2"/></svg>
<svg class="abs" style="left:94.5px;top:6px" width="13" height="11" viewBox="0 0 13 11"><path d="M0 5.5H12M7.4 .8L12.1 5.5L7.4 10.2" fill="none" stroke="#5c5c5c" stroke-width="1.2"/></svg>
<span class="abs" style="left:124px">pages</span><svg class="abs" style="left:164px;top:7px" width="6" height="9" viewBox="0 0 6 9"><path d="M.6 .5L5.2 4.5L.6 8.5" fill="none" stroke="#8c8c8c" stroke-width="1"/></svg><span class="abs" style="left:174.5px">pages1</span><svg class="abs" style="left:221px;top:7px" width="6" height="9" viewBox="0 0 6 9"><path d="M.6 .5L5.2 4.5L.6 8.5" fill="none" stroke="#8c8c8c" stroke-width="1"/></svg><svg class="abs" style="left:234px;top:4px" width="12" height="14"><use href="#i-wxml"/></svg><span class="abs" style="left:254px;color:#c4c4c4">pages1.wxml</span><svg class="abs" style="left:332.5px;top:7px" width="6" height="9" viewBox="0 0 6 9"><path d="M.6 .5L5.2 4.5L.6 8.5" fill="none" stroke="#8c8c8c" stroke-width="1"/></svg><span class="abs" style="left:343.5px">…</span>
</div>
</div><!--/ED2-->
<!--PANEL--><div id="panel" class="abs">
<div class="abs" style="left:20px;top:10px;height:18px;line-height:18px;font-size:11px;font-weight:bold;color:#f2f2f2;white-space:nowrap">调试器</div>
<div class="abs" style="left:20px;top:31px;width:33px;height:1px;background:#e8e8e8"></div>
<div class="abs ptab" style="left:72.5px">问题</div>
<div class="abs ptab" style="left:115px">输出</div>
<div class="abs ptab" style="left:156.5px">终端</div>
<svg class="abs" style="left:1220px;top:14px" width="12" height="7" viewBox="0 0 12 7"><path d="M.6 6L6 1L11.4 6" fill="none" stroke="#d0d0d0" stroke-width="1.1"/></svg>
<!-- devtools tab bar -->
<div class="abs" style="left:0;top:34px;width:1230px;height:27px;border-bottom:1px solid #474747"></div>
<div class="abs" style="left:95px;top:34px;width:66px;height:26px;background:#000"></div>
<svg class="abs" style="left:9px;top:41px" width="15" height="14" viewBox="0 0 15 14"><path d="M9.5 1H1.2V11.8H5" fill="none" stroke="#9c9c9c" stroke-width="1.2"/><path d="M6.4 4.6L13.6 8.2L10.6 9.2L12.4 12.4L11 13.2L9.2 10L7 12.2Z" fill="#9c9c9c"/></svg>
<div class="abs" style="left:34px;top:39px;width:1px;height:17px;background:#4a4a4a"></div>
<div class="dt" style="left:27.7px">Wxml</div>
<div class="dt on" style="left:87.9px">Console</div>
<div class="dt" style="left:153.3px">Sources</div>
<div class="dt" style="left:220.4px">Network</div>
<div class="dt" style="left:289px">Memory</div>
<div class="dt" style="left:355.8px">Security</div>
<div class="dt" style="left:415.5px">Mock</div>
<div class="dt" style="left:477px">AppData</div>
<div class="dt" style="left:540.5px">Audits</div>
<div class="dt" style="left:598.2px">Sensor</div>
<div class="dt" style="left:660px">Storage</div>
<div class="dt" style="left:719px">Trace</div>

<svg class="abs" style="left:1194.5px;top:40.8px" width="11" height="11" viewBox="0 0 11 11"><path d="M5.5 .4L10.8 10.4H.2Z" fill="#f4bd00"/><path d="M5.5 3.4V7.4M5.5 8.4V9.6" stroke="#fff" stroke-width="1.3"/></svg>
<div class="abs" style="left:1208px;top:38px;height:18px;line-height:18px;font-size:11.5px;color:#bdbdbd">1</div>
<div class="abs" style="left:1221px;top:39px;width:1px;height:17px;background:#444"></div>
<!-- console toolbar -->
<svg class="abs" style="left:8px;top:68px" width="15" height="14" viewBox="0 0 15 14"><path d="M.6 .6H14.4V13.4H.6ZM3.6 .6V13.4" fill="none" stroke="#9c9c9c" stroke-width="1.2"/><path d="M6.4 3.4L11.6 7L6.4 10.6Z" fill="#9c9c9c"/></svg>
<svg class="abs" style="left:37.5px;top:68px" width="14" height="14" viewBox="0 0 14 14"><circle cx="7" cy="7" r="5.8" fill="none" stroke="#9c9c9c" stroke-width="1.9"/><path d="M2.8 2.8L11.2 11.2" stroke="#9c9c9c" stroke-width="1.9"/></svg>
<div class="abs" style="left:62px;top:66px;width:1px;height:12px;background:#4a4a4a"></div>
<div class="abs" style="left:71.5px;top:66px;height:20px;line-height:20px;font-size:12px;color:#c4c4c4">top</div>
<i class="caret" style="left:193px;top:71px;border-top-color:#a8a8a8;border-left-width:3.5px;border-right-width:3.5px;border-top-width:5px"></i>
<div class="abs" style="left:209px;top:66px;width:1px;height:12px;background:#4a4a4a"></div>
<svg class="abs" style="left:219.5px;top:68.5px" width="17" height="12" viewBox="0 0 17 12"><path d="M0 6.5C2.6 2 5.4 0 8.5 0S14.4 2 17 6.5C14.4 11 11.6 13 8.5 13S2.6 11 0 6.5Z" fill="#9c9c9c"/><circle cx="8.5" cy="6.4" r="3" fill="#333"/></svg>
<div class="abs" style="left:246px;top:66px;width:1px;height:12px;background:#4a4a4a"></div>
<div class="abs" style="left:254px;top:65px;width:274px;height:20px;background:#242424;padding-left:4.5px;line-height:22.4px;font-size:12px;color:#7a7a7a">Filter</div>
<div class="abs" style="left:536px;top:66px;height:20px;line-height:20px;font-size:12px;color:#c4c4c4;white-space:nowrap">Default levels ▼</div>
</div><!--/PANEL-->
</body>
</html>
